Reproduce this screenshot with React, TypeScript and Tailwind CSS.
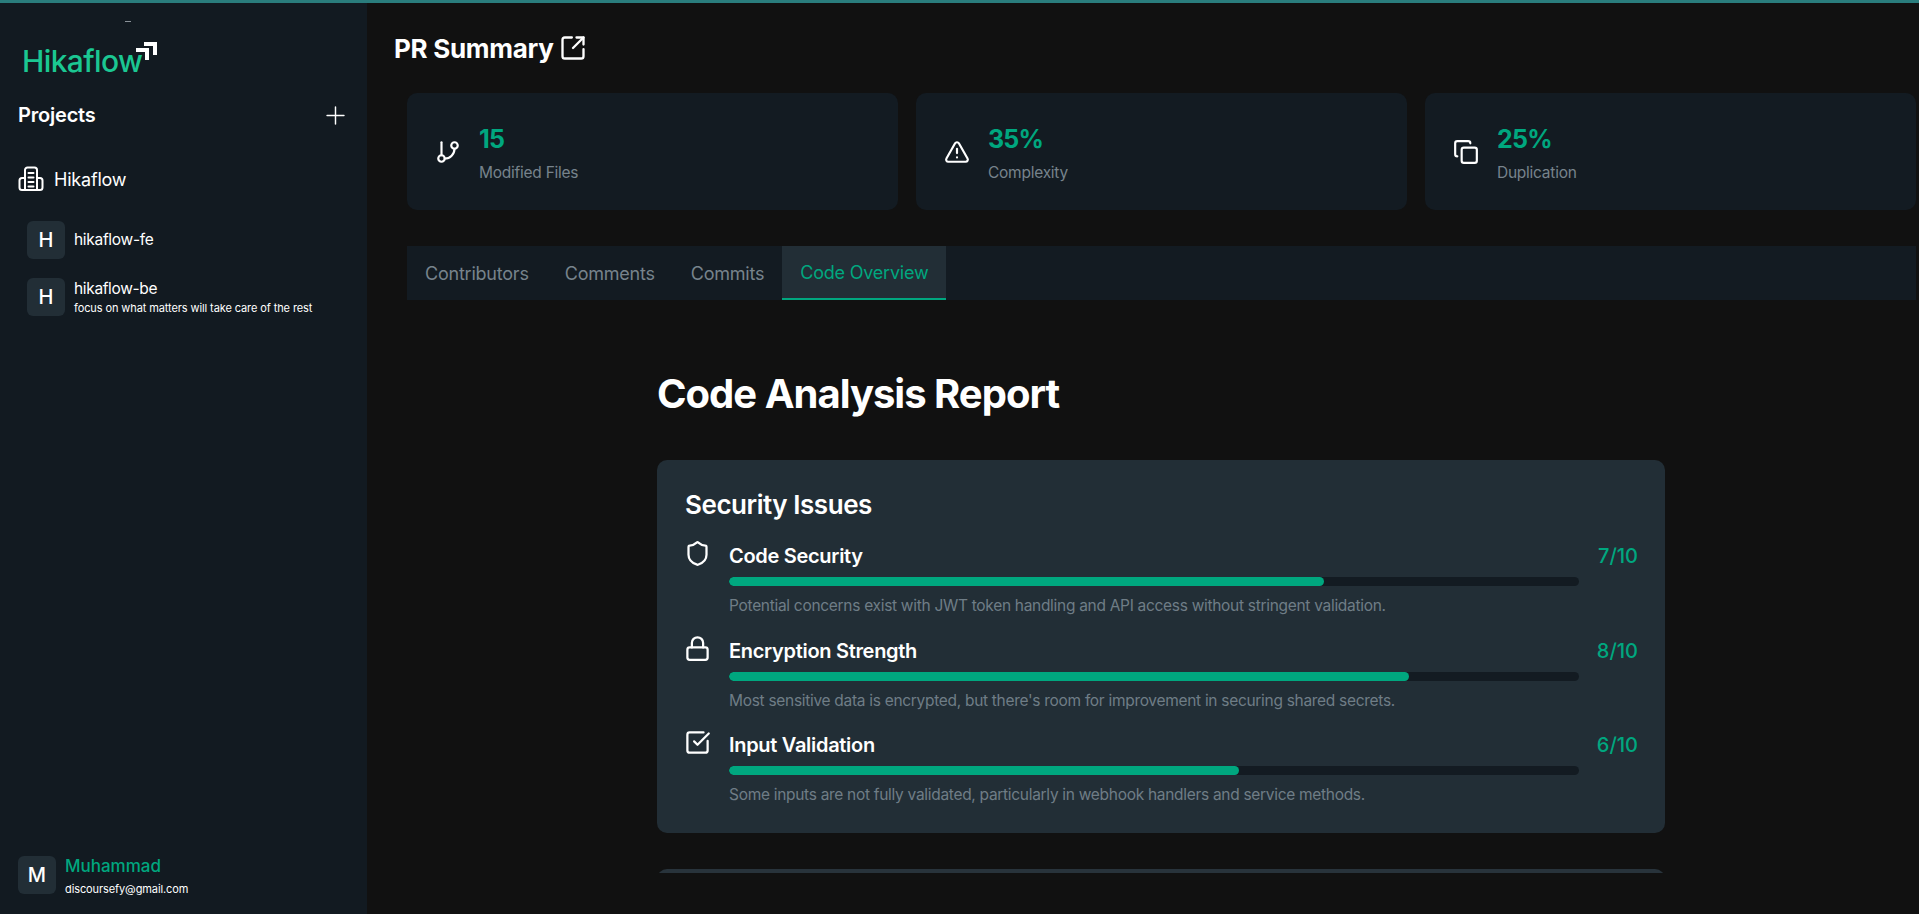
import { GitBranch, TriangleAlert, Copy, Shield, Lock, SquareCheckBig, Plus, SquareArrowOutUpRight } from "lucide-react";

const font = { fontFamily: "Inter, sans-serif" };

function Avatar({ letter }: { letter: string }) {
  return (
    <div className="flex h-[38px] w-[38px] shrink-0 items-center justify-center rounded-md bg-[#222e36] text-[20px] font-medium text-white">
      {letter}
    </div>
  );
}

function Stat({ icon, value, label }: { icon: React.ReactNode; value: string; label: string }) {
  return (
    <div className="flex h-[117px] flex-1 items-center gap-[18px] rounded-[10px] bg-[#131b22] pl-[28px]">
      <div className="text-white">{icon}</div>
      <div className="flex flex-col">
        <span className="text-[25px] leading-[38px] font-bold tracking-[-0.8px] text-[#00a77f]">{value}</span>
        <span className="mt-[4px] text-[15.5px] leading-[22px] tracking-[-0.25px] text-[#77838c]">{label}</span>
      </div>
    </div>
  );
}

function Row({ icon, title, score, pct, desc }: { icon: React.ReactNode; title: string; score: string; pct: number; desc: string }) {
  return (
    <div className="-mr-[1px] flex h-[94.5px] items-start">
      <div className="-ml-[1px] w-[45px] shrink-0 pt-[1px] text-white">{icon}</div>
      <div className="w-[850px] shrink-0 pt-[3px]">
        <div className="text-[20px] leading-[28px] font-semibold tracking-[-0.3px] text-white">{title}</div>
        <div className="mt-[7px] h-[9px] w-full overflow-hidden rounded-full bg-[#131b22]">
          <div className="h-full rounded-full bg-[#00a77f]" style={{ width: `${pct}%` }} />
        </div>
        <div className="mt-[9px] text-[15.5px] leading-[22px] tracking-[-0.3px] text-[#6f7d86]">{desc}</div>
      </div>
      <div className="ml-auto pt-[3px] text-[20px] leading-[28px] font-medium text-[#00a77f]">{score}</div>
    </div>
  );
}

export default function App() {
  return (
    <div style={font} className="flex h-[914px] w-full overflow-hidden border-t-[3px] border-[#2a7d7d] bg-[#111111]">
      <aside className="relative flex w-[367px] shrink-0 flex-col bg-[#121a21] pl-[18px]">
        <div className="absolute top-[18px] left-[125px] h-px w-[6px] bg-[#8a9299]" />
        <div className="mt-[39px] ml-[4px] flex h-[36px] items-end">
          <span className="text-[30px] leading-[34px] font-medium tracking-[-0.6px] text-[#1bc792]">Hikaflow</span>
          <svg width="21" height="18" viewBox="0 0 21 18" className="mb-[18px] -ml-[6px] text-white" fill="currentColor">
            <path d="M8 0h13v13h-4V4H8z" />
            <path d="M0 6h13v12H9v-8H0z" />
          </svg>
        </div>
        <div className="mt-[17px] flex h-[40px] items-center justify-between pr-[17px]">
          <span className="text-[20px] font-semibold tracking-[-0.2px] text-white">Projects</span>
          <Plus size={29} strokeWidth={1.2} className="text-white" />
        </div>
        <div className="mt-[26px] flex h-[36px] items-center gap-[10px]">
          <svg width="26" height="26" viewBox="0 0 26 26" fill="none" stroke="white" strokeWidth="2" strokeLinecap="round" strokeLinejoin="round">
            <path d="M7 24V4a2.5 2.5 0 0 1 2.5-2.5h7A2.5 2.5 0 0 1 19 4v20" />
            <path d="M7 12H4a2.5 2.5 0 0 0-2.5 2.5v7A2.5 2.5 0 0 0 4 24h18a2.5 2.5 0 0 0 2.5-2.5v-7A2.5 2.5 0 0 0 22 12h-3" />
            <path d="M10.5 7h5M10.5 11.5h5M10.5 16h5M10.5 20.5h5" />
          </svg>
          <span className="text-[18px] tracking-[-0.2px] text-white">Hikaflow</span>
        </div>
        <div className="mt-[24px] ml-[9px] flex items-center gap-[9px]">
          <Avatar letter="H" />
          <span className="text-[15.5px] tracking-[-0.3px] text-white">hikaflow-fe</span>
        </div>
        <div className="mt-[19px] ml-[9px] flex items-center gap-[9px]">
          <Avatar letter="H" />
          <div className="flex flex-col">
            <span className="text-[15.5px] leading-[22px] tracking-[-0.35px] text-white">hikaflow-be</span>
            <span className="text-[11px] leading-[16px] tracking-[-0.1px] text-white">focus on what matters will take care of the rest</span>
          </div>
        </div>
        <div className="mt-auto mb-[16px] flex items-center gap-[9px]">
          <Avatar letter="M" />
          <div className="flex flex-col pt-[2px]">
            <span className="text-[17px] leading-[24px] font-medium text-[#00a77f]">Muhammad</span>
            <span className="mt-[2px] text-[11px] leading-[18px] tracking-[-0.1px] text-white">discoursefy@gmail.com</span>
          </div>
        </div>
      </aside>
      <main className="flex min-w-0 flex-1 flex-col pb-[41px] pl-[27px]">
        <div className="flex h-[90px] shrink-0 items-center gap-[5px]">
          <h1 className="text-[26px] font-bold tracking-[-0.3px] text-white">PR Summary</h1>
          <SquareArrowOutUpRight size={28} className="text-white" />
        </div>
        <div className="flex min-h-0 flex-1 flex-col overflow-hidden pr-[3px] pl-[13px]">
          <div className="flex shrink-0 gap-[18px]">
            <Stat icon={<GitBranch size={26} />} value="15" label="Modified Files" />
            <Stat icon={<TriangleAlert size={26} />} value="35%" label="Complexity" />
            <Stat icon={<Copy size={26} />} value="25%" label="Duplication" />
          </div>
          <div className="mt-[36px] flex h-[54px] shrink-0 bg-[#131b22] text-[18px] tracking-[-0.22px] text-[#77838c]">
            <div className="flex items-center px-[18px]">Contributors</div>
            <div className="flex items-center px-[18px]">Comments</div>
            <div className="flex items-center px-[18px]">Commits</div>
            <div className="flex items-center border-b-2 border-[#00a77f] bg-[#222e36] px-[18px] text-[#00a77f]">Code Overview</div>
          </div>
          <div className="ml-[250px] w-[1008px] shrink-0">
            <h2 className="mt-[68px] text-[40px] leading-[52px] font-bold tracking-[-1px] text-white">Code Analysis Report</h2>
            <section className="mt-[40px] h-[373px] rounded-[10px] bg-[#222e36] px-[28px] pt-[27px]">
              <h3 className="text-[26px] leading-[36px] font-semibold tracking-[-0.45px] text-white">Security Issues</h3>
              <div className="mt-[16px]">
                <Row icon={<Shield size={27} />} title="Code Security" score="7/10" pct={70} desc="Potential concerns exist with JWT token handling and API access without stringent validation." />
                <Row icon={<Lock size={27} />} title="Encryption Strength" score="8/10" pct={80} desc="Most sensitive data is encrypted, but there's room for improvement in securing shared secrets." />
                <Row icon={<SquareCheckBig size={27} />} title="Input Validation" score="6/10" pct={60} desc="Some inputs are not fully validated, particularly in webhook handlers and service methods." />
              </div>
            </section>
            <section className="mt-[36px] h-[300px] rounded-[10px] bg-[#28333b]" />
          </div>
        </div>
      </main>
    </div>
  );
}
